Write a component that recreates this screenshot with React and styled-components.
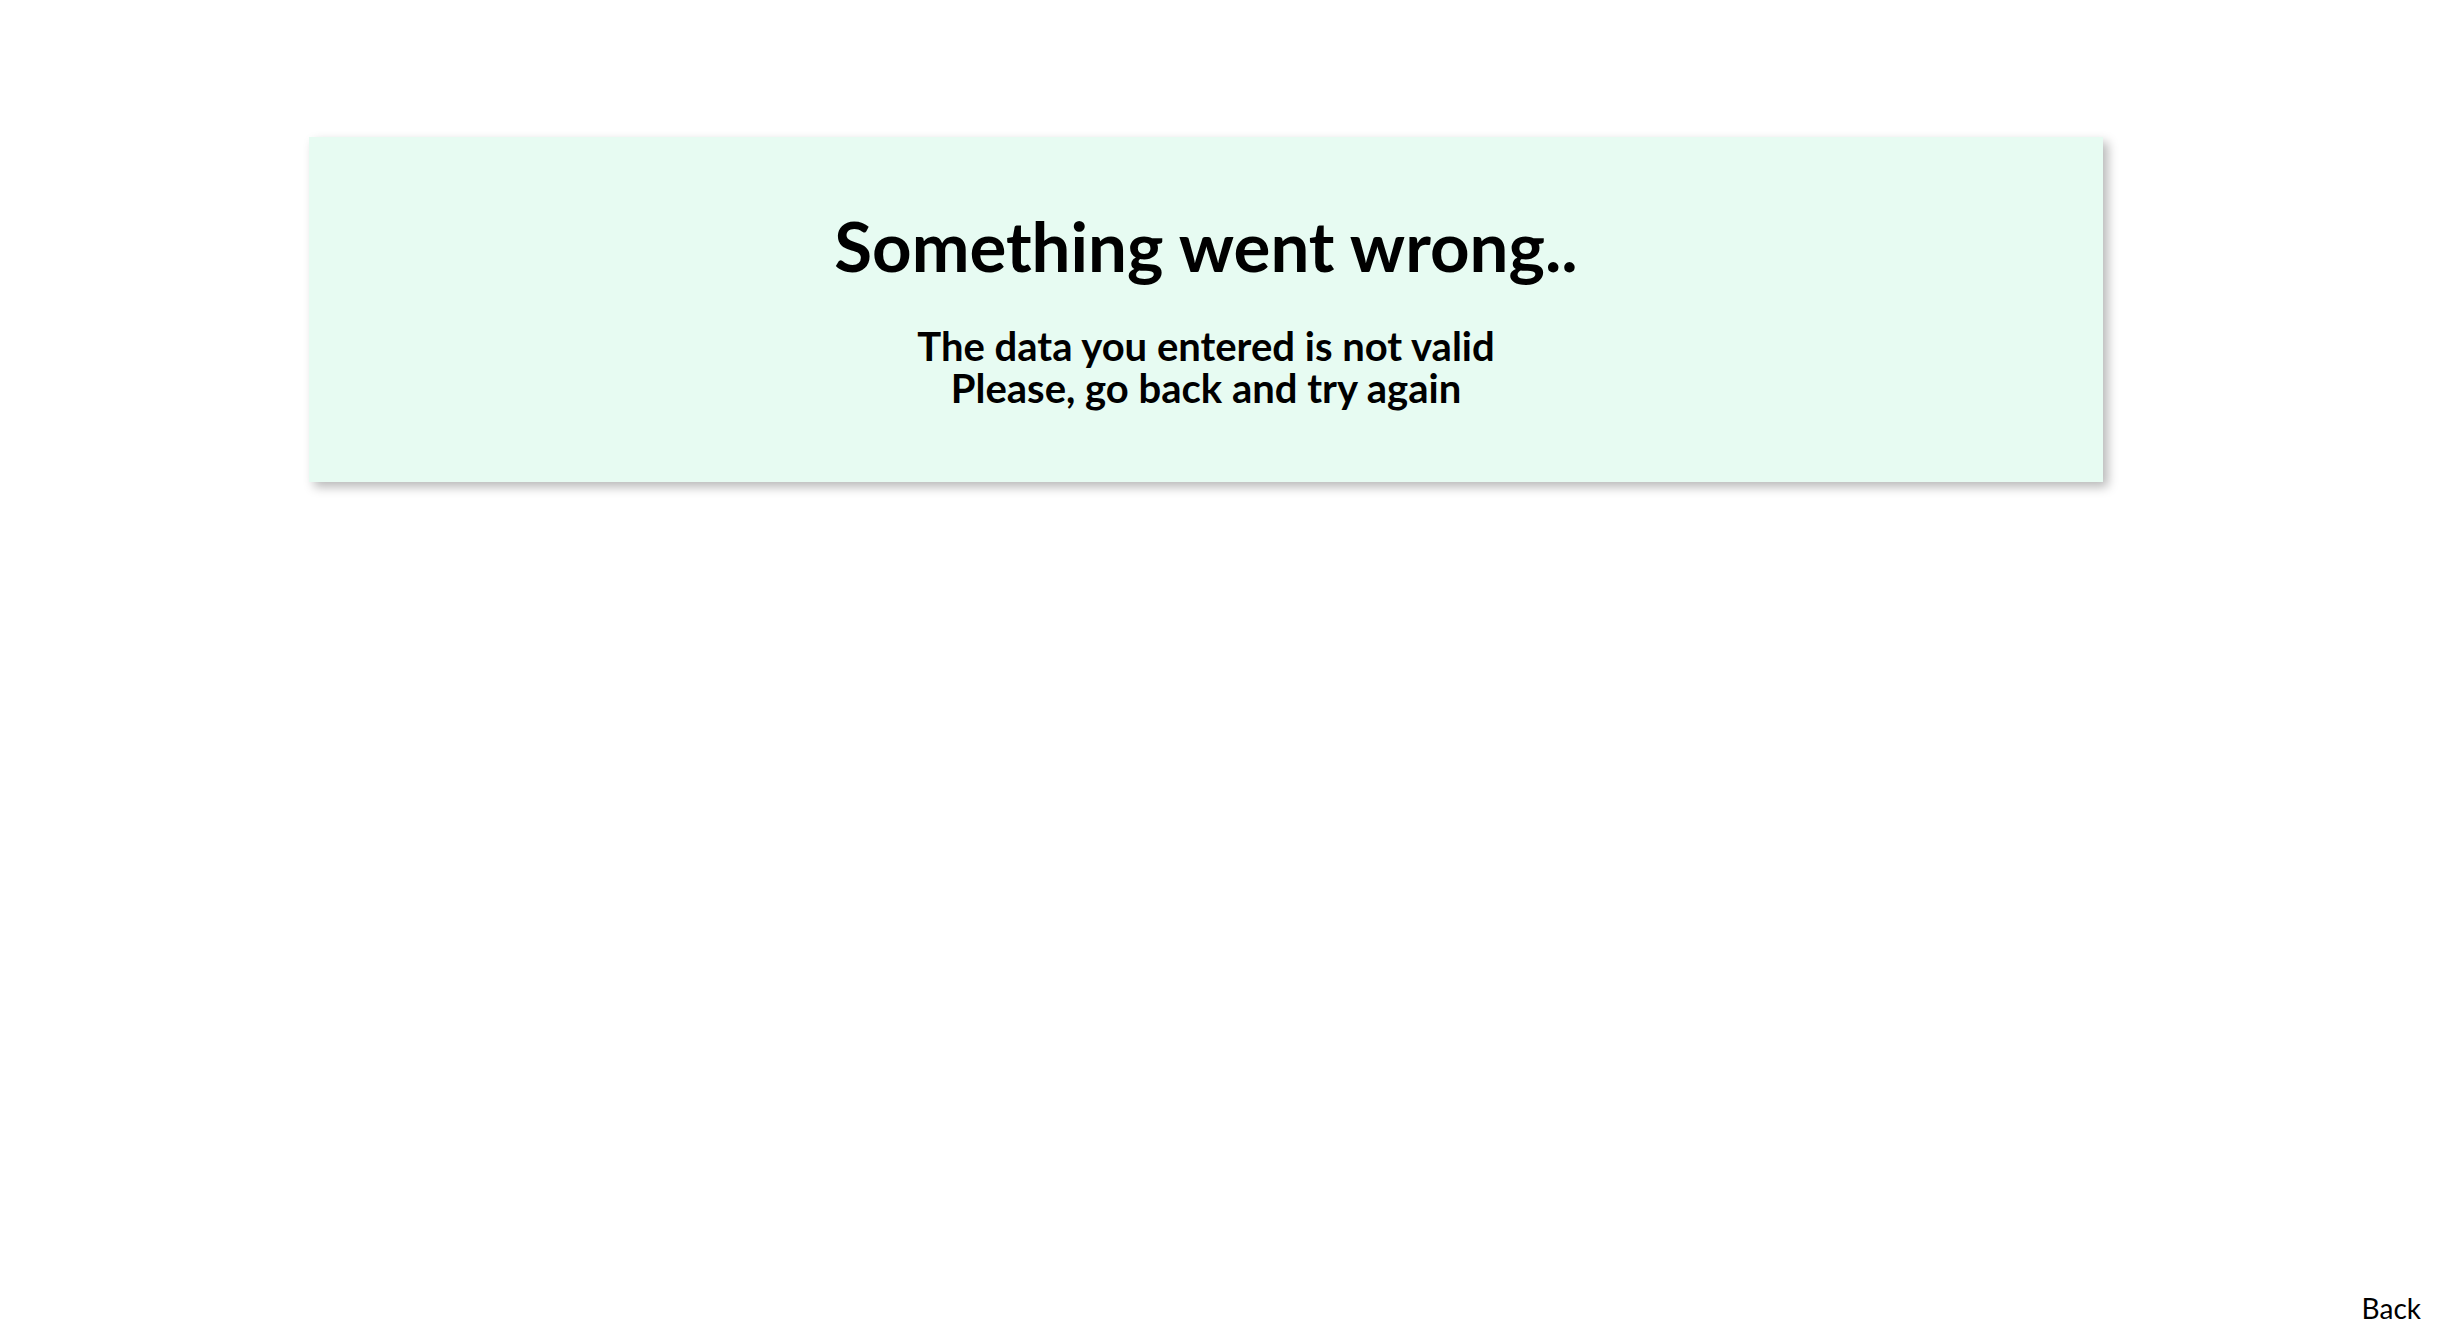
import React from 'react';
import styled, { createGlobalStyle } from 'styled-components';

const GlobalStyle = createGlobalStyle`
    html, body {
        margin: 0;
        padding: 0;
        background: #ffffff;
        font-family: Lato, "Open Sans", "Liberation Sans", sans-serif;
        color: #000000;
    }
`;

export const Page = styled.div`
    min-height: 100vh;
    display: flex;
    flex-direction: column;
    box-sizing: border-box;
`;

export const ErrorCard = styled.section`
    margin: 137px 0 0 309px;
    width: 1794px;
    height: 345px;
    box-sizing: border-box;
    padding: 68px 0 0 0;
    background: #e7fbf2;
    box-shadow: 5px 5px 10px rgba(0, 0, 0, 0.28);
    text-align: center;
`;

export const ErrorTitle = styled.h1`
    margin: 0;
    font-size: 69px;
    font-weight: 700;
    line-height: 1.2;
`;

export const ErrorText = styled.p`
    margin: 37px 0 0 0;
    font-size: 40px;
    font-weight: 700;
    line-height: 42px;
`;

export const Footer = styled.footer`
    margin-top: auto;
    display: flex;
    justify-content: flex-end;
    padding: 0 27px 17px 0;
`;

export const BackLink = styled.a`
    font-size: 28px;
    font-weight: 400;
    color: #000000;
    text-decoration: none;
    cursor: pointer;
`;

export default function App() {
    return (
        <>
            <GlobalStyle />
            <Page>
                <ErrorCard>
                    <ErrorTitle>Something went wrong..</ErrorTitle>
                    <ErrorText>
                        The data you entered is not valid
                        <br />
                        Please, go back and try again
                    </ErrorText>
                </ErrorCard>
                <Footer>
                    <BackLink>Back</BackLink>
                </Footer>
            </Page>
        </>
    );
}
